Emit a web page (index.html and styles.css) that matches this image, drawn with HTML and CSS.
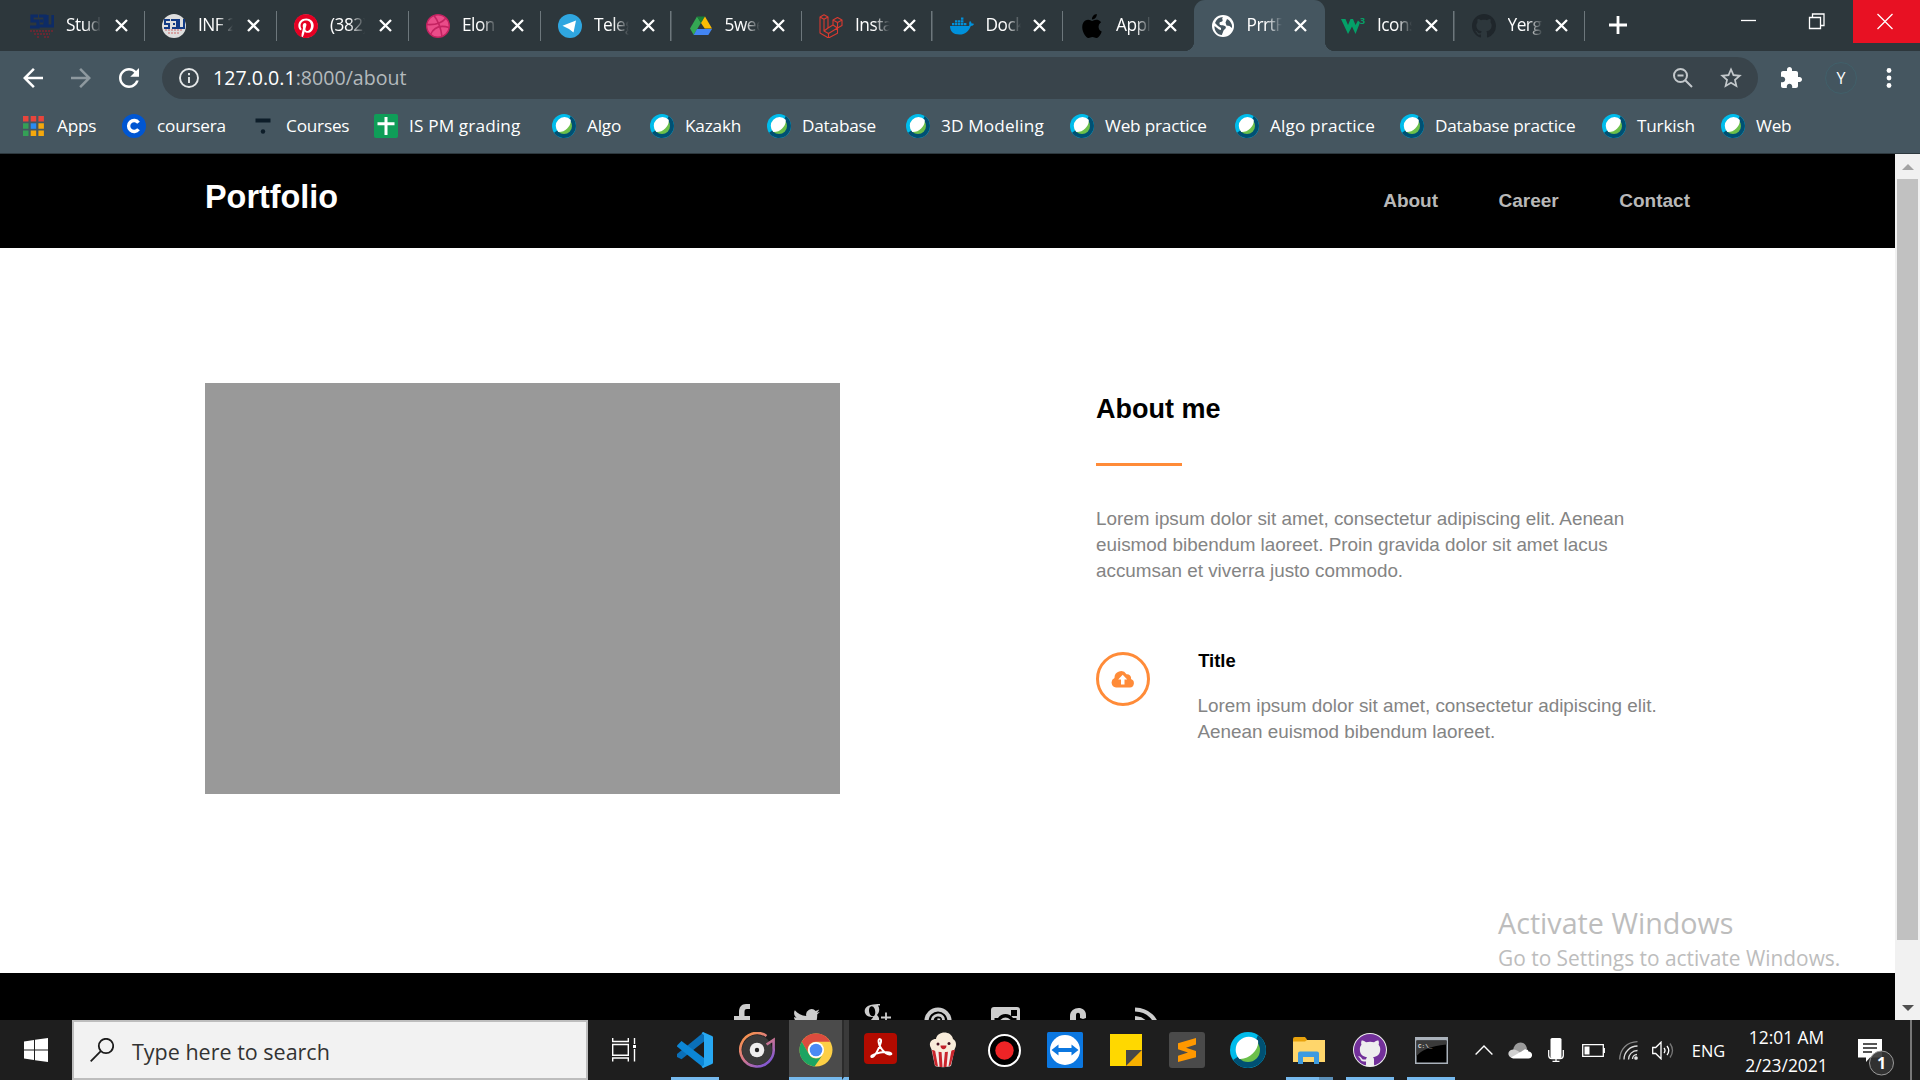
FILE: index.html
```html
<!DOCTYPE html>
<html lang="en">
<head>
<meta charset="utf-8">
<title>PrrtFolio</title>
<link rel="stylesheet" href="styles.css">
</head>
<body>
<svg class="defs" aria-hidden="true">
  <symbol id="x" viewBox="0 0 13 13"><path d="M1 1l11 11M12 1L1 12" stroke="#fff" stroke-width="2.3" fill="none"/></symbol>
  <symbol id="webex" viewBox="0 0 36 36">
    <circle cx="18" cy="18" r="18" fill="#00bceb"/>
    <path d="M28 3A18 18 0 1 1 3 28L9 24 26 8z" fill="#005073"/>
    <circle cx="18" cy="18" r="12" fill="#6cc04a"/>
    <path d="M28 8.500C29.500 17 20 27.500 9.500 27A12.800 12.800 0 0 1 28 8.500z" fill="#fff"/>
  </symbol>
  <symbol id="octocat" viewBox="0 0 16 16"><path d="M8 0C3.580 0 0 3.580 0 8c0 3.540 2.290 6.530 5.470 7.590.4.070.55-.17.55-.38 0-.19-.01-.82-.01-1.490-2.010.37-2.530-.49-2.690-.94-.09-.23-.48-.94-.82-1.130-.28-.15-.68-.52-.01-.53.63-.01 1.080.58 1.230.82.72 1.210 1.870.87 2.330.66.070-.52.28-.87.51-1.070-1.780-.2-3.640-.89-3.640-3.950 0-.87.31-1.590.82-2.150-.08-.2-.36-1.020.08-2.120 0 0 .67-.21 2.200.82.64-.18 1.320-.27 2-.27s1.360.09 2 .27c1.530-1.040 2.200-.82 2.200-.82.44 1.100.16 1.920.08 2.120.51.56.82 1.270.82 2.150 0 3.070-1.870 3.750-3.650 3.950.29.25.54.73.54 1.480 0 1.070-.01 1.930-.01 2.200 0 .21.15.46.55.38A8.010 8.010 0 0 0 16 8c0-4.420-3.580-8-8-8z"/></symbol>
  <symbol id="pin" viewBox="0 0 24 24"><path d="M12.017 0C5.396 0 .029 5.367.029 11.987c0 5.079 3.158 9.417 7.618 11.162-.105-.949-.199-2.403.041-3.439.219-.937 1.406-5.957 1.406-5.957s-.359-.72-.359-1.781c0-1.663.967-2.911 2.168-2.911 1.024 0 1.518.769 1.518 1.688 0 1.029-.653 2.567-.992 3.992-.285 1.193.6 2.165 1.775 2.165 2.128 0 3.768-2.245 3.768-5.487 0-2.861-2.063-4.869-5.008-4.869-3.410 0-5.409 2.562-5.409 5.199 0 1.033.394 2.143.889 2.741.099.12.112.225.085.345-.09.375-.293 1.199-.334 1.363-.053.225-.172.271-.401.165-1.495-.69-2.433-2.878-2.433-4.646 0-3.776 2.748-7.252 7.920-7.252 4.158 0 7.392 2.967 7.392 6.923 0 4.135-2.607 7.462-6.233 7.462-1.214 0-2.354-.629-2.758-1.379l-.749 2.848c-.269 1.045-1.004 2.352-1.498 3.146 1.123.345 2.306.535 3.550.535 6.607 0 11.985-5.365 11.985-11.987C23.970 5.390 18.592.026 11.985.026z"/></symbol>
</svg>

<header class="browser">
  <div class="tabs">
    <div class="tab wide"><svg class="fav" viewBox="0 0 24 24"><g fill="none" stroke="#0d2b66" stroke-width="3.200"><path d="M8 2H2v5h6v6H0M9 2h6v10H9M10 7h3M17 1v11h6V1"/></g><path d="M0 17h24M4 20h16M7 23h3m4 0h5" stroke="#7a2530" stroke-width="1.500" stroke-dasharray="2 1"/></svg><span class="title">Stud</span><svg class="close"><use href="#x"/></svg></div>
    <div class="tab wide"><svg class="fav" viewBox="0 0 24 24"><circle cx="12" cy="12" r="12" fill="#dedede"/><path d="M8 6H3v4h4v4H2M9 6h6v8h-5M11 10h2M17 5v9h5V5" fill="none" stroke="#123a85" stroke-width="2"/><path d="M3 16h18M6 19h12" stroke="#c66" stroke-dasharray="2 1"/></svg><span class="title">INF 2</span><svg class="close"><use href="#x"/></svg></div>
    <div class="tab wide"><svg class="fav" viewBox="0 0 24 24"><circle cx="12" cy="12" r="11.500" fill="#fff"/><use href="#pin" fill="#e60023"/></svg><span class="title">(382)</span><svg class="close"><use href="#x"/></svg></div>
    <div class="tab wide"><svg class="fav" viewBox="0 0 24 24"><circle cx="12" cy="12" r="11.300" fill="#ea4c89" stroke="#c32361" stroke-width="1.400"/><path d="M8 1.500C13 8 15 15 16 22.500M1 10.500C9 11 16 9 20 4M4.500 20.500C8 13 15 11 23 13.500" fill="none" stroke="#c32361" stroke-width="1.600"/></svg><span class="title">Elon</span><svg class="close"><use href="#x"/></svg></div>
    <div class="tab"><svg class="fav" viewBox="0 0 24 24"><circle cx="12" cy="12" r="12" fill="#2fa6e0"/><path d="M4.500 11.700L18 6.500 15.500 18.500 11 15z" fill="#fff"/></svg><span class="title">Teleg</span><svg class="close"><use href="#x"/></svg></div>
    <div class="tab"><svg class="fav" viewBox="0 0 24 24"><path d="M8 2.500L1 14.500l3.700 6.500 7.300-12.300z" fill="#34a853"/><path d="M8 2.500h8L12 9z" fill="#188038"/><path d="M16 2.500l7 12h-7.300L12 9z" fill="#fbbc04"/><path d="M8 15h15l-3.700 6H4.700z" fill="#4285f4"/></svg><span class="title">5wee</span><svg class="close"><use href="#x"/></svg></div>
    <div class="tab"><svg class="fav" viewBox="0 0 24 24" fill="none" stroke="#d93a30" stroke-width="1.100" stroke-linejoin="round"><path d="M1 3l4-2.200L9 3v11l5-3V6l4.500-2.500L23 6v5.500l-4.500 2.500v5.300L9.500 24 1 19zM1 3l4 2.300L9 3M5 5.300V17l4-3M5 17l4.500 2.500 9-5.500L14 11M9.500 19.500V24M14 6l4.500 2.500L23 6M18.500 8.500V14"/></svg><span class="title">Insta</span><svg class="close"><use href="#x"/></svg></div>
    <div class="tab"><svg class="fav" viewBox="0 0 24 24" fill="#0091dc"><path d="M0 12h18c1 0 1.500-.4 1.300-1.500-.4-1.400 0-2.500.7-3.500 1 .7 1.500 1.600 1.600 2.500 1 0 2 0 2.400.4-.5 1.300-1.500 2-3.200 2C19 17 15 20.500 9.500 20.500 3 20.500 0 17 0 12z"/><path d="M2 9h2.400v2.300H2zM5 9h2.400v2.300H5zM8 9h2.400v2.300H8zM11 9h2.400v2.300H11zM14 9h2.400v2.300H14zM5 6.200h2.400v2.300H5zM8 6.200h2.400v2.300H8zM11 6.200h2.400v2.300H11zM11 3.400h2.400v2.300H11z"/></svg><span class="title">Dock</span><svg class="close"><use href="#x"/></svg></div>
    <div class="tab nosep"><svg class="fav" viewBox="0 0 24 24"><path d="M12.152 6.896c-.948 0-2.415-1.078-3.960-1.040-2.040.027-3.910 1.183-4.961 3.014-2.117 3.675-.546 9.103 1.519 12.090 1.013 1.454 2.208 3.090 3.792 3.039 1.520-.065 2.090-.987 3.935-.987 1.831 0 2.350.987 3.960.948 1.637-.026 2.676-1.480 3.676-2.948 1.156-1.688 1.636-3.325 1.662-3.415-.039-.013-3.182-1.221-3.220-4.857-.026-3.040 2.480-4.494 2.597-4.559-1.429-2.090-3.623-2.324-4.390-2.376-2-.156-3.675 1.090-4.610 1.090zM15.530 3.830c.843-1.012 1.400-2.427 1.245-3.830-1.207.052-2.662.805-3.532 1.818-.78.896-1.454 2.338-1.273 3.714 1.338.104 2.715-.688 3.559-1.701"/></svg><span class="title">Appl</span><svg class="close"><use href="#x"/></svg></div>
    <div class="tab active"><svg class="fav" viewBox="0 0 24 24"><circle cx="12" cy="12" r="11" fill="#fff"/><path d="M12 3c-2 2 1 3-1 4.500-1 .8-2.500 0-2.500 2s2 1.500 4 2c2 .4 3 1.500 2 3-.8 1.300-2 1.200-2.500 3.500-.2 1.200-1 2-1 3C6 21 3 16 3.500 12L8 15.500l2 .5v-2L7 12 4 9C5.500 5 8 3 12 3zm4 2c4 2 5.500 6 5 9l-2.500-2-3-.5-1-3z" fill="#455660"/></svg><span class="title">PrrtF</span><svg class="close"><use href="#x"/></svg></div>
    <div class="tab"><svg class="fav" viewBox="0 0 24 24"><path d="M0 5h4.500l2.500 6 2.500-6H12l2.500 6L17 6.500l2 2L14.500 20 11 12.500 7 20z" fill="#04a068"/><text x="19" y="10" class="sup">3</text></svg><span class="title">Icons</span><svg class="close"><use href="#x"/></svg></div>
    <div class="tab"><svg class="fav"><use href="#octocat" fill="#1f262b"/></svg><span class="title">Yerg</span><svg class="close"><use href="#x"/></svg></div>
    <svg class="newtab" viewBox="0 0 18 18"><path d="M9 0v18M0 9h18" stroke="#fff" stroke-width="2.800"/></svg>
    <div class="winbtns">
      <svg viewBox="0 0 67 43"><path d="M20 20.500h15" stroke="#fff" stroke-width="1.300"/></svg>
      <svg viewBox="0 0 67 43"><path d="M22.500 17.500h11v11h-11zM25.500 17v-3h11.500v11.500h-3" stroke="#fff" stroke-width="1.300" fill="none"/></svg>
      <svg class="quit" viewBox="0 0 67 43"><path d="M24.500 14l15 15M39.500 14l-15 15" stroke="#fff" stroke-width="1.300"/></svg>
    </div>
  </div>

  <div class="toolbar">
    <svg class="nav" viewBox="0 0 24 24" fill="#fff"><path d="M20 11H7.830l5.590-5.590L12 4l-8 8 8 8 1.410-1.410L7.830 13H20z"/></svg>
    <svg class="nav" viewBox="0 0 24 24" fill="#8e999f"><path d="M4 11h12.170l-5.590-5.590L12 4l8 8-8 8-1.410-1.410L16.170 13H4z"/></svg>
    <svg class="nav" viewBox="0 0 24 24" fill="#fff"><path d="M17.650 6.350C16.200 4.900 14.210 4 12 4c-4.420 0-7.990 3.580-7.990 8s3.570 8 7.990 8c3.730 0 6.840-2.550 7.730-6h-2.080c-.82 2.330-3.040 4-5.650 4-3.310 0-6-2.690-6-6s2.690-6 6-6c1.660 0 3.140.69 4.220 1.780L13 11h7V4z"/></svg>
    <div class="omnibox">
      <svg class="info" viewBox="0 0 20 20" fill="none" stroke="#e4e7e8" stroke-width="1.900"><circle cx="10" cy="10" r="9"/><path d="M10 9v6M10 5v2.200"/></svg>
      <span class="url">127.0.0.1<span class="dim">:8000/about</span></span>
      <svg class="mag" viewBox="0 0 20 20" fill="none" stroke="#c3c8cb" stroke-width="2"><circle cx="7.500" cy="7.500" r="6.500"/><path d="M12 12l7 7M4.500 7.500h6"/></svg>
      <svg class="star" viewBox="0 0 24 24" fill="#c3c8cb"><path d="M22 9.240l-7.190-.62L12 2 9.190 8.630 2 9.240l5.460 4.730L5.820 21 12 17.270 18.180 21l-1.630-7.030zM12 15.400l-3.760 2.270 1-4.280-3.320-2.880 4.380-.38L12 6.100l1.710 4.040 4.380.38-3.320 2.880 1 4.280z"/></svg>
    </div>
    <svg class="puzzle" viewBox="0 0 24 24" fill="#fff"><path d="M20.500 11H19V7c0-1.100-.9-2-2-2h-4V3.500C13 2.120 11.880 1 10.500 1S8 2.120 8 3.500V5H4c-1.100 0-1.990.9-1.990 2v3.800H3.500c1.490 0 2.700 1.210 2.700 2.700s-1.210 2.700-2.700 2.700H2V20c0 1.100.9 2 2 2h3.800v-1.500c0-1.490 1.210-2.700 2.700-2.700s2.700 1.210 2.700 2.700V22H17c1.100 0 2-.9 2-2v-4h1.500c1.380 0 2.500-1.120 2.500-2.500S21.880 11 20.500 11z"/></svg>
    <div class="avatar">Y</div>
    <svg class="dots" viewBox="0 0 6 20" fill="#fff"><circle cx="3" cy="2.500" r="2.400"/><circle cx="3" cy="10" r="2.400"/><circle cx="3" cy="17.500" r="2.400"/></svg>
  </div>

  <nav class="bookmarks">
    <a><svg viewBox="0 0 24 24"><path d="M1 2h5.500v5.500H1zM8.700 2h5.500v5.500H8.700zM16.400 2h5.500v5.500h-5.500z" fill="#e8453c"/><path d="M1 9.300h5.500v5.500H1zM1 16.600h5.500v5.500H1z" fill="#34a056"/><path d="M8.700 9.300h5.500v5.500H8.700z" fill="#2a8bf2"/><path d="M16.400 9.300h5.500v5.500h-5.500zM8.700 16.600h5.500v5.500H8.700zM16.400 16.600h5.500v5.500h-5.500z" fill="#f5a80c"/></svg><span>Apps</span></a>
    <a><svg viewBox="0 0 24 24"><circle cx="12" cy="12" r="12" fill="#0056d2"/><path d="M16.500 8.700a5.500 5.500 0 1 0 0 6.600" fill="none" stroke="#fff" stroke-width="3.400"/></svg><span>coursera</span></a>
    <a><svg viewBox="0 0 24 24"><path d="M4.500 4.500h15v4h-15z" fill="#0d1d29"/><circle cx="12" cy="17.500" r="2.200" fill="#0d1d29"/></svg><span>Courses</span></a>
    <a class="loose"><svg viewBox="0 0 24 24"><rect width="24" height="24" rx="2" fill="#0f9d58"/><path d="M12 3v18M3.500 9.800h17" stroke="#fff" stroke-width="3"/></svg><span>IS PM grading</span></a>
    <a><svg><use href="#webex"/></svg><span>Algo</span></a>
    <a><svg><use href="#webex"/></svg><span>Kazakh</span></a>
    <a><svg><use href="#webex"/></svg><span>Database</span></a>
    <a class="loose"><svg><use href="#webex"/></svg><span>3D Modeling</span></a>
    <a><svg><use href="#webex"/></svg><span>Web practice</span></a>
    <a class="loose"><svg><use href="#webex"/></svg><span>Algo practice</span></a>
    <a><svg><use href="#webex"/></svg><span>Database practice</span></a>
    <a><svg><use href="#webex"/></svg><span>Turkish</span></a>
    <a><svg><use href="#webex"/></svg><span>Web</span></a>
  </nav>
</header>

<div class="viewport">
  <div class="page">
    <div class="site-head">
      <h1>Portfolio</h1>
      <nav><a>About</a><a>Career</a><a>Contact</a></nav>
    </div>
    <main>
      <div class="photo"></div>
      <section class="about">
        <h2>About me</h2>
        <div class="rule"></div>
        <p>Lorem ipsum dolor sit amet, consectetur adipiscing elit. Aenean<br>euismod bibendum laoreet. Proin gravida dolor sit amet lacus<br>accumsan et viverra justo commodo.</p>
        <div class="feature">
          <div class="ring"><svg viewBox="0 0 24 18"><path d="M5 17.500A5 5 0 0 1 3.500 8 6.500 6.500 0 0 1 15.500 4.200 4 4 0 0 1 20 9a4.400 4.400 0 0 1-1 8.500z" fill="#ff8b38"/><path d="M11.700 4.800l4.500 4.800h-2.700v4.900H10V9.600H7.200z" fill="#fff"/></svg></div>
          <div>
            <h3>Title</h3>
            <p>Lorem ipsum dolor sit amet, consectetur adipiscing elit.<br>Aenean euismod bibendum laoreet.</p>
          </div>
        </div>
      </section>
    </main>
    <footer>
      <svg width="18" height="30" viewBox="0 0 18 30"><path d="M5 30V16H0v-4h5V8c0-5 2.500-8 7-8h4v5h-3c-2 0-2.500 1-2.500 3v4H16v4h-5.500v14z"/></svg>
      <svg width="27" height="30" viewBox="0 0 24 26"><path d="M23.953 6.570a10 10 0 0 1-2.825.775 4.958 4.958 0 0 0 2.163-2.723c-.951.555-2.005.959-3.127 1.184a4.920 4.920 0 0 0-8.384 4.482C7.690 10.095 4.067 8.130 1.640 5.162a4.822 4.822 0 0 0-.666 2.475c0 1.710.87 3.213 2.188 4.096a4.904 4.904 0 0 1-2.228-.616c0 2.400 1.700 4.400 3.946 4.887a4.996 4.996 0 0 1-2.212.085 4.936 4.936 0 0 0 4.604 3.417A9.867 9.867 0 0 1 0 21.544c11 7 22 0 21.500-12.500z"/></svg>
      <svg width="28" height="30" viewBox="0 0 28 30"><path d="M6.500 1C10 0 13 0 16 0v1.500h-2c2 3 1.500 7-1 9.500 2 2 3 4 1 8H6c0-4 3-4 3-6-9.500 1-11.500-10-2.500-12zm1 1.300c-4 .5-3 10 1.500 10 3.700-.5 2.700-10.300-1.500-10z" fill-rule="evenodd"/><path d="M17 13.500h10M22 8.500v10" stroke="#ccc" stroke-width="1.800"/></svg>
      <svg width="28" height="30" viewBox="0 0 28 30" fill="none" stroke="#ccc"><circle cx="14" cy="17" r="11.500" stroke-width="4.200"/><path d="M8.500 18.500c-2-9 11-10 11-2.500 0 5-4 5.500-5.500 3.500l1-5" stroke-width="2.800"/></svg>
      <svg width="29" height="30" viewBox="0 0 29 30"><path fill-rule="evenodd" d="M3 3h23a3 3 0 0 1 3 3v21H0V6a3 3 0 0 1 3-3zm17 3v6h6V6zM3.500 14v13h22V14H22a9 9 0 0 0-15 0z"/><circle cx="14.500" cy="20" r="6.500"/></svg>
      <svg width="17" height="30" viewBox="0 0 17 30"><path d="M0 20V12c0-10 16-11 16-1v3l-3 1-3-1v-3c0-3-4-3-4 0v9z"/></svg>
      <svg width="26" height="30" viewBox="0 0 26 30" fill="none" stroke="#ccc" stroke-width="4.200"><path d="M0 5.500C13 6 22 14 23 28M0 14c8 .5 13.500 6 14 14"/></svg>
    </footer>
  </div>
  <div class="scrollbar">
    <svg width="12" height="6" viewBox="0 0 12 6"><path d="M0 6l6-6 6 6z" fill="#a3a3a3"/></svg>
    <div class="thumb"></div>
    <svg class="down" width="12" height="6" viewBox="0 0 12 6"><path d="M0 0l6 6 6-6z" fill="#505050"/></svg>
  </div>
</div>

<div class="taskbar">
  <div class="start"><svg width="24" height="24" viewBox="0 0 24 24" fill="#fff"><path d="M0 3.400l10-1.400v9.500H0zM11 1.800L24 0v11.500H11zM0 12.500h10V22L0 20.600zM11 12.500h13V24l-13-1.800z"/></svg></div>
  <div class="search"><svg width="24" height="24" viewBox="0 0 24 24" fill="none" stroke="#1c1c1c" stroke-width="1.800"><circle cx="16" cy="8" r="7.200"/><path d="M10.800 13.200L.7 23.300"/></svg><span>Type here to search</span></div>
  <div class="apps">
    <div class="app"><svg width="24" height="24" viewBox="0 0 24 24" fill="none" stroke="#fff" stroke-width="1.400"><path d="M.7 6.500h15.600v10.800H.7zM.7 0v3.500h15.600V0M.7 23.500V20h15.600v3.500M22.500 0v6M22.500 11v12.500"/><path d="M21 7h3v3h-3z" fill="#fff" stroke="none"/></svg></div>
    <div class="app run"><svg width="36" height="36" viewBox="0 0 36 36"><path d="M27 0v9.500L4.500 27.200 0 25v-3z" fill="#0a6fb8"/><path d="M0 13.500L4.500 9 27 26v10L0 14.500z" fill="#0c86d6"/><path d="M26 0l9 4c.7.300 1 .8 1 1.500v25c0 .7-.3 1.200-1 1.500l-9 4-1.500-1.200L27 33V3l-2.500-1.800z" fill="#27a8f2"/></svg></div>
    <div class="app groove"><svg width="36" height="36" viewBox="0 0 36 36"><defs><linearGradient id="gr" x1="0" y1="0" x2=".8" y2="1"><stop offset="0" stop-color="#ff9a3c"/><stop offset=".5" stop-color="#d97a86"/><stop offset="1" stop-color="#7a55d8"/></linearGradient></defs><circle cx="18" cy="18" r="15" fill="#3a3a3a"/><path d="M27.500 4A16.700 16.700 0 1 0 34.600 16V8l-7 4.500" fill="none" stroke="url(#gr)" stroke-width="2.600"/><circle cx="18" cy="18" r="7.300" fill="#eee"/><circle cx="18" cy="18" r="2.200" fill="#222"/></svg></div>
    <div class="app chrome"><div><svg width="34" height="34" viewBox="0 0 34 34"><circle cx="17" cy="17" r="16.500" fill="#fdcf45"/><path d="M2.700 8.700A16.500 16.500 0 0 1 31.300 8.700H17a8.300 8.300 0 0 0-7.500 12z" fill="#dc4c3e"/><path d="M2.700 8.700A16.500 16.500 0 0 0 15.500 33.500L24 21.500a8 8 0 0 1-14.200-.8z" fill="#1da462"/><circle cx="17" cy="17" r="8" fill="#fff"/><circle cx="17" cy="17" r="6.300" fill="#4a8af4"/></svg></div><i></i></div>
    <div class="app up"><svg width="33" height="31" viewBox="0 0 33 31"><rect width="33" height="31" rx="4" fill="#b30b00"/><path d="M7.500 24c-2-1.500 8-5 13-5 8 0 8 3 5 2.500-5-.5-11-8-11-13.500 0-3 3.200-2.500 2.500 1C16 14 10 25.500 7.500 24z" fill="none" stroke="#fff" stroke-width="1.900"/></svg></div>
    <div class="app"><svg width="28" height="36" viewBox="0 0 28 36"><path d="M2 15h24l-4 19c-4 1.500-12 1.500-16 0z" fill="#f4ece8"/><path d="M3 18h3l3 16.500-3-1zM9.500 19h3l1 16h-3zM16 19h3l-1.500 16h-3zM22.500 18H26l-4.500 15.500-2 .8z" fill="#c9252c"/><path d="M4 18C-1 15 0 7 7 7c1-8 15-9 17 0 4 2 4 9 0 11-6 3-14 3-20 0z" fill="#f8ecda"/><circle cx="9" cy="12" r="1.500" fill="#412"/><circle cx="20" cy="11.500" r="1.500" fill="#412"/><path d="M11.500 13.500h6c0 5-6 5-6 0z" fill="#c11f2a"/></svg></div>
    <div class="app"><svg width="33" height="33" viewBox="0 0 33 33"><circle cx="16.500" cy="16.500" r="15.500" stroke="#fff" stroke-width="2"/><circle cx="16.500" cy="16.500" r="9.200" fill="#ee2426"/></svg></div>
    <div class="app"><svg width="36" height="36" viewBox="0 0 36 36"><rect width="36" height="36" rx="1.500" fill="#0b77e0"/><circle cx="18" cy="18" r="15" fill="#fff"/><path d="M4.500 18l7-5.500v3.500h13v-3.500l7 5.500-7 5.500V20h-13v3.500z" fill="#0b77e0"/></svg></div>
    <div class="app"><svg width="32" height="32" viewBox="0 0 32 32"><path d="M0 0h32v16L16 32H0z" fill="#ffd800"/><path d="M16 16h16L16 32z" fill="#474747"/><path d="M32 16v16H16z" fill="#f7b000"/></svg></div>
    <div class="app"><svg width="36" height="36" viewBox="0 0 36 36"><rect width="36" height="36" rx="3" fill="#4a4a4a"/><path d="M27 6v6.500l-10 3.200 10 3.300v6.300L9 30v-6.300l10-3.300-10-3.200v-6z" fill="#ff9800"/></svg></div>
    <div class="app"><svg width="36" height="36"><use href="#webex"/></svg></div>
    <div class="app run multi"><svg width="32" height="27" viewBox="0 0 32 27"><path d="M0 2a2 2 0 0 1 2-2h10l2 2.500V6H0z" fill="#e8a20c"/><path d="M0 4.500h12l2-1.500h18v22H0z" fill="#ffd66b"/><path d="M5 27V16.500a2 2 0 0 1 2-2h17a2 2 0 0 1 2 2V27h-5v-7H10v7z" fill="#3d9be0"/></svg></div>
    <div class="app run"><svg width="34" height="34" viewBox="0 0 34 34"><circle cx="17" cy="17" r="17" fill="#eee"/><svg x="1" y="1" width="32" height="32"><use href="#octocat" fill="#72309a"/></svg></svg></div>
    <div class="app run"><svg width="33" height="27" viewBox="0 0 33 27"><rect width="33" height="27" fill="#aab2bb"/><path d="M1.500 3.500h30v22h-30z" fill="#000"/><path d="M1.500 3.500h30v4C14 9 6 14 1.500 19z" fill="#3a3a3a"/><text x="3" y="10.500" class="cmd">C:\_</text></svg></div>
  </div>
  <div class="tray">
    <div><svg width="18" height="10" viewBox="0 0 18 10"><path d="M.6 9.400L9 1l8.400 8.400" fill="none" stroke="#fff" stroke-width="1.400"/></svg></div>
    <div><svg width="24" height="17" viewBox="0 0 24 17"><path d="M5 9C6-2 18-2 19 7l-8 4z" fill="#9a9a9a"/><path d="M4 16c-5-1-5-8 1-8.500 3 0 6 2 9 4.500z" fill="#cfcfcf"/><path d="M3 15.500L15 8.500c2-2 5-1.500 5.500 1 5 .5 4.500 7 0 7H5z" fill="#fff"/></svg></div>
    <div><svg width="16" height="24" viewBox="0 0 16 24"><rect x="2.500" width="11" height="20" rx="1.500" fill="#fff"/><path d="M.7 12v5.500q0 3 3 3h8.600q3 0 3-3V12M8 20.500V23M4.500 23.300h7" fill="none" stroke="#fff" stroke-width="1.300"/></svg></div>
    <div><svg width="23" height="13" viewBox="0 0 23 13"><path d="M.7.700h20.600v11.600H.7zM22.300 4v5" fill="none" stroke="#fff" stroke-width="1.300"/><path d="M2.500 2.500h5v8h-5z" fill="#fff"/></svg></div>
    <div><svg width="19" height="19" viewBox="0 0 19 19" fill="none" stroke="#ddd" stroke-width="1.300"><path d="M.7 18.500C1 8 8 1 18.500.7" stroke="#888"/><path d="M5 18.500C5 11 11 5 18.500 5M9.500 18.500c0-5 4-9 9-9"/><path d="M13.500 18c0-2.500 2-4.500 4.500-4.500"/><circle cx="17" cy="17" r="1.200" fill="#fff"/></svg></div>
    <div><svg width="22" height="19" viewBox="0 0 22 19" fill="none" stroke="#fff" stroke-width="1.300"><path d="M.7 6.500h3L9 1.200v16.600l-5.300-5.300h-3zM12 7q2 2.500 0 5M15 5q3.500 4.500 0 9"/><path d="M18 2.500q5 7 0 14" stroke="#777"/></svg></div>
    <div class="lang">ENG</div>
    <div class="clock"><span>12:01 AM</span><span>2/23/2021</span></div>
    <div class="notes"><svg width="37" height="37" viewBox="0 0 37 37"><path d="M0 0h24v18.500H12l-4 4.500v-4.500H0z" fill="#fff"/><path d="M5 5h14M5 9h14M5 13h9" stroke="#1e1e1e" stroke-width="1.300"/><circle cx="23.500" cy="24" r="12" fill="#333" fill-opacity=".9" stroke="#9a9a9a"/><text x="23.500" y="30" class="count">1</text></svg></div>
    <div class="peek"></div>
  </div>
</div>

<div class="watermark"><div class="big">Activate Windows</div><div class="small">Go to Settings to activate Windows.</div></div>
</body>
</html>
```
FILE: styles.css
```css
* { box-sizing: border-box; }
body { margin: 0; width: 1920px; height: 1080px; overflow: hidden; display: flex; flex-direction: column; background: #fff; font-family: "Open Sans", "Noto Sans", sans-serif; }
svg { display: block; flex: none; }
.defs { position: absolute; width: 0; height: 0; }
h1, h2, h3, p { margin: 0; }

/* browser chrome */
.browser { height: 154px; background: #455660; color: #fff; border-bottom: 1px solid #2d383e; }
.tabs { height: 51px; background: #2d373c; display: flex; padding-left: 13px; }
.tab { width: 130.5px; height: 51px; display: flex; align-items: center; padding-left: 17px; font-size: 17.3px; letter-spacing: -.5px; background: linear-gradient(#6d777c, #6d777c) right 11px / 1.5px 30px no-repeat; }
.tab.wide { width: 132px; }
.tab.nosep { background: none; }
.tab.active { background: #455660; border-radius: 11px 11px 0 0; position: relative; width: 131px; margin-right: -.5px; }
.tab.active::before, .tab.active::after { content: ""; position: absolute; bottom: 0; width: 10px; height: 10px; }
.tab.active::before { left: -10px; background: radial-gradient(circle at 0 0, transparent 10px, #455660 10.5px); }
.tab.active::after { right: -10px; background: radial-gradient(circle at 100% 0, transparent 10px, #455660 10.5px); }
.fav { width: 24px; height: 24px; margin-right: 12px; }
.title { width: 35px; line-height: 24px; padding-bottom: 2px; overflow: hidden; white-space: nowrap; -webkit-mask-image: linear-gradient(to right, #000 55%, transparent); mask-image: linear-gradient(to right, #000 55%, transparent); }
.close { width: 13px; height: 13px; margin-left: 12.500px; }
.wide .close { margin-left: 14px; }
.sup { font: bold 9px "Open Sans", sans-serif; fill: #04a068; }
.newtab { width: 18px; height: 18px; margin: 16px 0 0 24px; }
.winbtns { display: flex; margin-left: auto; }
.winbtns svg { width: 67px; height: 43px; }
.winbtns svg:first-child, .winbtns svg:nth-child(2) { margin-right: -1px; }
.quit { background: #e81123; }

.toolbar { height: 54px; display: flex; align-items: center; padding-left: 18px; }
.nav { width: 30px; height: 30px; margin-right: 18px; }
.nav:nth-of-type(3) { margin-right: 18px; }
.omnibox { width: 1596px; height: 42px; border-radius: 21px; background: #39444b; display: flex; align-items: center; padding: 0 14px 0 17px; }
.info { width: 20px; height: 20px; margin-right: 14px; }
.url { font-size: 19.6px; line-height: 30px; flex: 1; }
.dim { color: #b4babd; }
.mag { width: 20px; height: 20px; margin-right: 25px; }
.star { width: 26px; height: 26px; }
.puzzle { width: 24px; height: 24px; margin: 0 22px 0 21px; }
.avatar { width: 32px; height: 32px; border-radius: 50%; border: 1px solid #41606a; background: #43555f; font-size: 16px; line-height: 30px; text-align: center; }
.dots { width: 6px; height: 20px; margin-left: 29px; }

.bookmarks { height: 42px; padding-left: 22px; display: grid; grid-template-columns: 100px 129px 123px 178px 98px 117px 139px 164px 165px 165px 202px 119px 80px; font-size: 17.2px; letter-spacing: -.2px; }
.bookmarks a { display: flex; align-items: center; gap: 11px; white-space: nowrap; }
.bookmarks span { padding-bottom: 2px; }
.bookmarks .loose { letter-spacing: .15px; }
.bookmarks svg { width: 24px; height: 24px; }

/* page */
.viewport { height: 866px; display: flex; font-family: "Liberation Sans", Arial, sans-serif; }
.page { width: 1895px; display: flex; flex-direction: column; }
.site-head { height: 94px; background: #000; padding: 25px 205px 0; display: flex; justify-content: space-between; }
h1 { font-size: 32.4px; line-height: 37px; color: #fff; }
.site-head nav { display: flex; gap: 60.5px; padding-top: 11px; font-size: 19px; line-height: 22px; font-weight: bold; color: #b8b8b8; }
main { height: 725px; padding: 135px 205px 0; display: flex; gap: 256px; }
.photo { width: 635px; height: 411px; background: #999; }
.about { color: #848484; font-size: 18.88px; line-height: 26px; }
h2 { color: #000; font-size: 27px; line-height: 30px; padding-top: 11px; }
.rule { width: 86px; height: 3px; margin: 39px 0 40px; background: #ff8b38; }
.about p { white-space: nowrap; }
.feature { display: flex; gap: 47.5px; margin-top: 65px; }
.ring { width: 54px; height: 54px; margin-top: 3px; border: 3px solid #ff8b38; border-radius: 50%; display: flex; align-items: center; justify-content: center; }
.ring svg { width: 24px; height: 18px; }
h3 { color: #000; font-size: 18.4px; line-height: 24px; margin-bottom: 20px; padding-left: .7px; }
footer { height: 47px; background: #000; overflow: hidden; padding: 31px 0 0 734px; display: grid; grid-template-columns: 59px 71px 60px 67px 79px 65px 26px; fill: #ccc; }
.scrollbar { width: 25px; background: #f1f1f1; display: flex; flex-direction: column; align-items: center; padding: 10px 0 9px; }
.thumb { width: 21px; height: 761px; margin-top: 9px; background: #c1c1c1; }
.down { margin-top: auto; }

/* taskbar */
.taskbar { height: 60px; background: #1e1e1e; display: flex; color: #fff; }
.start { width: 72px; display: flex; align-items: center; justify-content: center; }
.search { width: 516px; height: 60px; background: #f2f2f2; border: 2px solid #bdbdbd; display: flex; align-items: center; gap: 18px; padding-left: 16px; font-size: 21.5px; color: #333; }
.search span { padding-top: 2px; }
.apps { display: grid; grid-template-columns: 72px 70px 54px 65px 63px 62px 60px 62px 60px 62px 60px 62px 60px 62px; }
.app { display: flex; align-items: center; justify-content: center; }
.app.run { background: linear-gradient(#76b9ed, #76b9ed) center bottom / 48px 3px no-repeat; }
.app.multi { background: linear-gradient(to right, #76b9ed 33px, #5b8fb8 33px) center bottom / 47px 3px no-repeat; }
.app.groove { justify-content: flex-start; padding-left: 9px; }
.app.chrome { align-items: stretch; justify-content: flex-start; padding-left: 5px; }
.chrome div { width: 53px; background: #4b4b4b; border-bottom: 3px solid #76b9ed; display: flex; align-items: center; justify-content: center; padding-top: 3px; }
.chrome i { width: 7px; background: #3a3a3a; border-left: 2px solid #2b2b2b; border-bottom: 3px solid #76b9ed; }
.app.up { padding-bottom: 3px; }
.cmd { font: bold 6px "Liberation Mono", monospace; fill: #ddd; }
.tray { flex: 1; display: grid; grid-template-columns: 44px 28px 43px 32px 39px 30px 61px 95px 72px 1fr; font-size: 17.4px; }
.tray > div { display: flex; align-items: center; justify-content: center; }
.tray .lang { font-size: 16.4px; }
.tray .clock { flex-direction: column; line-height: 28px; padding-top: 1px; }
.tray .notes { justify-content: flex-start; padding: 15px 0 0 24px; }
.count { font: bold 16px "Open Sans", sans-serif; fill: #fff; text-anchor: middle; }
.tray .peek { border-left: 2px solid #777; margin-left: 4px; }

/* activation notice, drawn over the page */
.watermark { position: absolute; left: 1498px; top: 899px; color: #bdbdbd; white-space: nowrap; }
.big { font-size: 28.7px; line-height: 48px; }
.small { font-size: 20.9px; line-height: 22px; }
```
